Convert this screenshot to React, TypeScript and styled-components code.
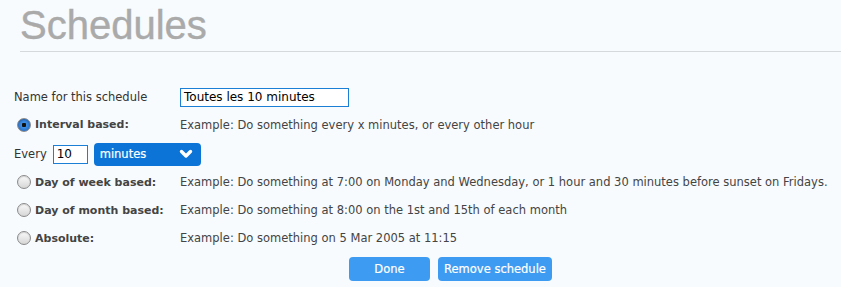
import React from "react";
import styled, { createGlobalStyle } from "styled-components";

const GlobalStyle = createGlobalStyle`
    html, body {
        margin: 0;
        padding: 0;
        background: #f7fbfd;
    }
    body {
        font-family: "DejaVu Sans", "Liberation Sans", sans-serif;
        font-size: 11.5px;
        color: #333;
    }
`

const Page = styled.div`
    width: 841px;
    height: 287px;
    overflow: hidden;
`

const Header = styled.div`
    margin-left: 20px;
    padding-top: 2px;
    height: 49px;
    border-bottom: 1px solid #d6d9db;
`

const Title = styled.h1`
    margin: 0;
    font-family: "Liberation Sans", Arial, sans-serif;
    font-weight: normal;
    font-size: 40px;
    line-height: 46px;
    color: #aaaaaa;
    -webkit-text-stroke: 0.4px #aaaaaa;
`

const FormBody = styled.div`
    display: flex;
    flex-direction: column;
    padding: 33px 0 0 14px;
`

const Row = styled.div<{ $h: number }>`
    display: flex;
    align-items: center;
    height: ${p => p.$h}px;
`

const Label = styled.div`
    width: 166px;
    flex: none;
    display: flex;
    align-items: center;
`

const BoldLabel = styled.span`
    font-weight: bold;
    font-size: 11px;
    color: #444;
`

const Radio = styled.span<{ $checked?: boolean }>`
    width: 12px;
    height: 12px;
    margin: 0 4px 0 3px;
    border-radius: 50%;
    border: 1px solid #8a8a8a;
    background: ${p => p.$checked
        ? "radial-gradient(circle, #111 0 2px, #3e8ee6 2.5px, #1b5fb5 100%)"
        : "linear-gradient(#fafafa, #d6d6d6)"};
    box-shadow: inset 0 1px 1px rgba(0,0,0,0.15);
    flex: none;
`

const Example = styled.div`
    color: #444;
`

const TextInput = styled.div<{ $w: number }>`
    box-sizing: border-box;
    width: ${p => p.$w}px;
    height: 19px;
    border: 1px solid #1b7fd6;
    background: #fff;
    color: #000;
    font-size: 12px;
    line-height: 17px;
    padding-left: 3px;
`

const EveryLabel = styled.span`
    margin-right: 6px;
`

const Select = styled.div`
    box-sizing: border-box;
    width: 107px;
    height: 23px;
    margin-left: 6px;
    border-radius: 4px;
    background: #0b74d6;
    color: #fff;
    display: flex;
    align-items: center;
    justify-content: space-between;
    padding: 0 8px 0 6px;
    font-size: 11.5px;
    -webkit-text-stroke: 0.2px #fff;
`

const Buttons = styled.div`
    display: flex;
    justify-content: center;
    gap: 8px;
    margin-top: 5px;
    padding-left: 46px;
`

const Button = styled.div<{ $w: number }>`
    width: ${p => p.$w}px;
    height: 24px;
    border-radius: 4px;
    background: #3d9bf1;
    color: #fff;
    display: flex;
    align-items: center;
    justify-content: center;
    font-size: 11.5px;
    -webkit-text-stroke: 0.2px #fff;
`

const Chevron = () => (
    <svg width="14" height="10" viewBox="0 0 14 10">
        <path d="M2.5 2.5 L7 7 L11.5 2.5" stroke="#fff" strokeWidth="3.4" fill="none" strokeLinecap="round" strokeLinejoin="round" />
    </svg>
)

const options = [
    { label: "Day of week based:", example: "Example: Do something at 7:00 on Monday and Wednesday, or 1 hour and 30 minutes before sunset on Fridays." },
    { label: "Day of month based:", example: "Example: Do something at 8:00 on the 1st and 15th of each month" },
    { label: "Absolute:", example: "Example: Do something on 5 Mar 2005 at 11:15" },
]

export default function App() {
    return (
        <Page>
            <GlobalStyle />
            <Header>
                <Title>Schedules</Title>
            </Header>
            <FormBody>
                <Row $h={24}>
                    <Label>Name for this schedule</Label>
                    <TextInput $w={169}>Toutes les 10 minutes</TextInput>
                </Row>
                <Row $h={31}>
                    <Label><Radio $checked /><BoldLabel>Interval based:</BoldLabel></Label>
                    <Example>Example: Do something every x minutes, or every other hour</Example>
                </Row>
                <Row $h={28}>
                    <EveryLabel>Every</EveryLabel>
                    <TextInput $w={35}>10</TextInput>
                    <Select>minutes<Chevron /></Select>
                </Row>
                {options.map(o => (
                    <Row $h={28} key={o.label}>
                        <Label><Radio /><BoldLabel>{o.label}</BoldLabel></Label>
                        <Example>{o.example}</Example>
                    </Row>
                ))}
                <Buttons>
                    <Button $w={81}>Done</Button>
                    <Button $w={114}>Remove schedule</Button>
                </Buttons>
            </FormBody>
        </Page>
    )
}
